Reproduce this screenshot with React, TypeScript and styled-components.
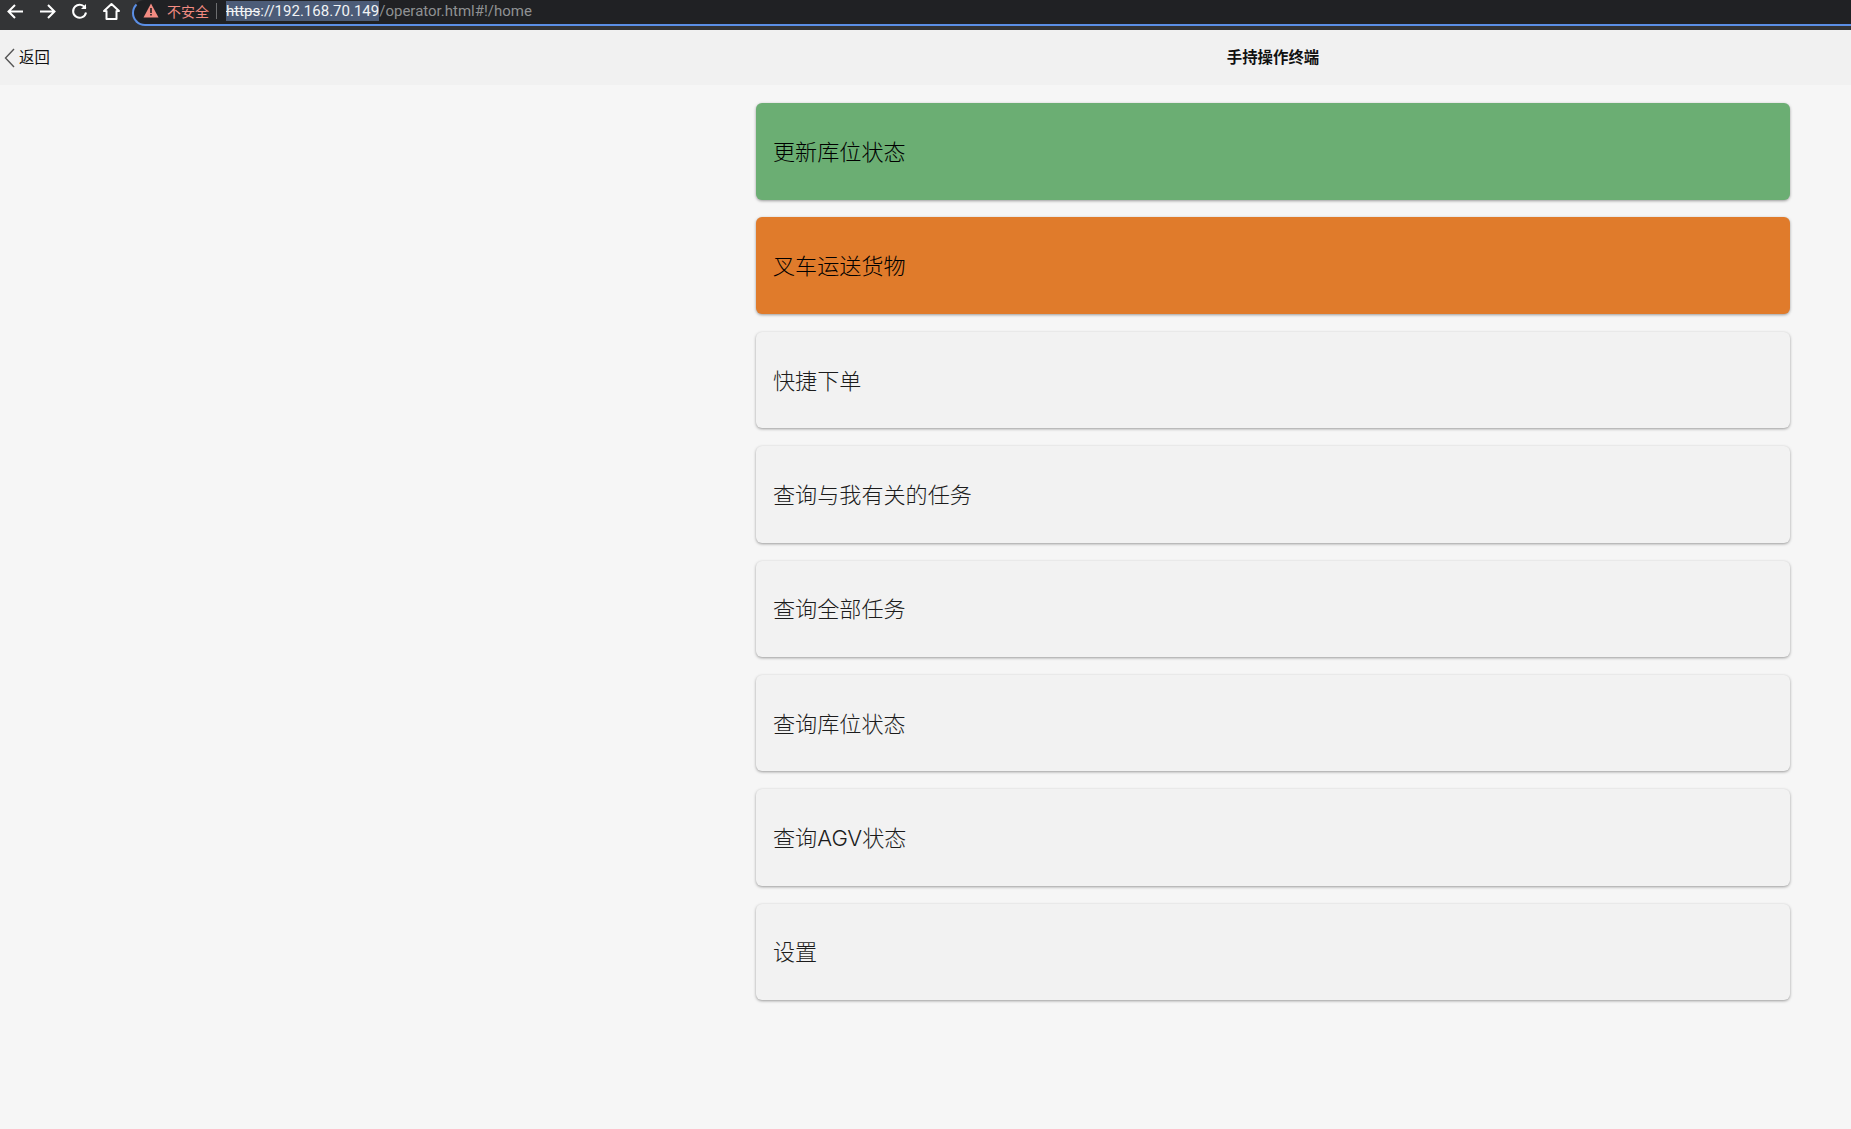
import {FC} from 'react';
import styled, {createGlobalStyle} from 'styled-components';

const GlobalStyle = createGlobalStyle`
    html, body {
        margin: 0;
        padding: 0;
        background: #f6f6f6;
        font-family: "Inter", "Noto Sans CJK SC", sans-serif;
    }
`;

const Page = styled.div`
    width: 1851px;
    height: 1129px;
    overflow: hidden;
    background: #f6f6f6;
`;

const BrowserBar = styled.div`
    height: 30px;
    display: flex;
    background: #333436;
    box-sizing: border-box;
    padding-bottom: 4px;
`;

const NavButtons = styled.div`
    width: 132px;
    flex-shrink: 0;
    display: flex;
    align-items: center;
    color: #fff;
    padding-left: 5px;
    gap: 11px;
    box-sizing: border-box;
`;

const NavIcon = styled.svg`
    width: 21px;
    height: 21px;
    fill: none;
    stroke: #fff;
    stroke-width: 2;
    margin-top: -3px;
`;

const AddressBar = styled.div`
    flex: 1;
    height: 26px;
    background: #202124;
    border: solid #5b8fe6;
    border-width: 2px 0 2px 2px;
    border-top-color: #202124;
    border-radius: 14px 0 0 14px;
    display: flex;
    align-items: center;
    box-sizing: border-box;
    padding: 0 0 5px 9px;
    font-family: "Roboto", "Noto Sans CJK SC", sans-serif;
    font-size: 15px;
    white-space: nowrap;
`;

const WarningIcon = styled.svg`
    width: 16px;
    height: 15px;
    margin-right: 8px;
`;

const Insecure = styled.span`
    color: #f28b82;
    font-family: "Noto Sans CJK SC", sans-serif;
    font-size: 14px;
`;

const Separator = styled.span`
    width: 1px;
    height: 16px;
    background: #6d6e70;
    margin: 0 9px 0 7px;
`;

const Selected = styled.span`
    background: #4c5c78;
    color: #f1f3f4;
    line-height: 20px;
`;

const Scheme = styled.span`
    text-decoration: line-through;
`;

const Path = styled.span`
    color: #8f9193;
`;

const Header = styled.div`
    height: 55px;
    display: grid;
    grid-template-columns: 756px 1034px;
    align-items: center;
    background: #f1f1f1;
`;

const Back = styled.div`
    display: flex;
    align-items: center;
    padding: 0 0 3px 4px;
    gap: 4px;
    font-size: 15.4px;
    color: #111;
    font-family: "Noto Sans CJK SC", sans-serif;
`;

const Chevron = styled.svg`
    width: 11px;
    height: 20px;
    fill: none;
    stroke: #555;
    stroke-width: 1.4;
    margin-top: 3px;
`;

const Title = styled.div`
    text-align: center;
    font-size: 15.4px;
    font-weight: 700;
    color: #111;
    padding-bottom: 3px;
    font-family: "Noto Sans CJK SC", sans-serif;
`;

const Menu = styled.div`
    margin: 18px 61px 0 756px;
    display: flex;
    flex-direction: column;
    gap: 17.9px;
`;

const MenuItem = styled.div<{$bg: string; $color: string}>`
    height: 96.5px;
    display: flex;
    align-items: center;
    box-sizing: border-box;
    padding: 0 0 3px 17px;
    border-radius: 6px;
    font-size: 22.1px;
    font-weight: 300;
    background: ${p => p.$bg};
    color: ${p => p.$color};
    box-shadow: 0 1px 3px rgba(0, 0, 0, 0.38);
`;

const items = [
    {label: '更新库位状态', bg: '#6bae73', color: '#000'},
    {label: '叉车运送货物', bg: '#e07b2b', color: '#000'},
    {label: '快捷下单', bg: '#f2f2f2', color: '#1c1c1c'},
    {label: '查询与我有关的任务', bg: '#f2f2f2', color: '#1c1c1c'},
    {label: '查询全部任务', bg: '#f2f2f2', color: '#1c1c1c'},
    {label: '查询库位状态', bg: '#f2f2f2', color: '#1c1c1c'},
    {label: '查询AGV状态', bg: '#f2f2f2', color: '#1c1c1c'},
    {label: '设置', bg: '#f2f2f2', color: '#1c1c1c'},
];

const App: FC = () => {
    return (
        <Page>
            <GlobalStyle />
            <BrowserBar>
                <NavButtons>
                    <NavIcon viewBox="0 0 21 21">
                        <path d="M18 10.500H4M10 4l-6.500 6.500L10 17" />
                    </NavIcon>
                    <NavIcon viewBox="0 0 21 21">
                        <path d="M3 10.500h14M11 4l6.500 6.500L11 17" />
                    </NavIcon>
                    <NavIcon viewBox="0 0 21 21">
                        <path d="M16.500 7.500a6.500 6.500 0 1 0 .5 4" />
                        <path d="M17 3v5h-5" fill="#fff" stroke="none" />
                    </NavIcon>
                    <NavIcon viewBox="0 0 21 21">
                        <path d="M10.500 3L3 10h2.500v8h10v-8H18z" strokeLinejoin="round" />
                    </NavIcon>
                </NavButtons>
                <AddressBar>
                    <WarningIcon viewBox="0 0 16 15">
                        <path d="M8 0.500L15.500 14.500H0.500z" fill="#f28b82" />
                        <path d="M7.200 5h1.600v5H7.200zM7.200 11h1.600v1.600H7.200z" fill="#202124" />
                    </WarningIcon>
                    <Insecure>不安全</Insecure>
                    <Separator />
                    <Selected><Scheme>https</Scheme>://192.168.70.149</Selected>
                    <Path>/operator.html#!/home</Path>
                </AddressBar>
            </BrowserBar>
            <Header>
                <Back>
                    <Chevron viewBox="0 0 11 20">
                        <path d="M10 1L1.500 10l8.500 9" />
                    </Chevron>
                    返回
                </Back>
                <Title>手持操作终端</Title>
            </Header>
            <Menu>
                {items.map(item => (
                    <MenuItem key={item.label} $bg={item.bg} $color={item.color}>
                        {item.label}
                    </MenuItem>
                ))}
            </Menu>
        </Page>
    );
};

export default App;
